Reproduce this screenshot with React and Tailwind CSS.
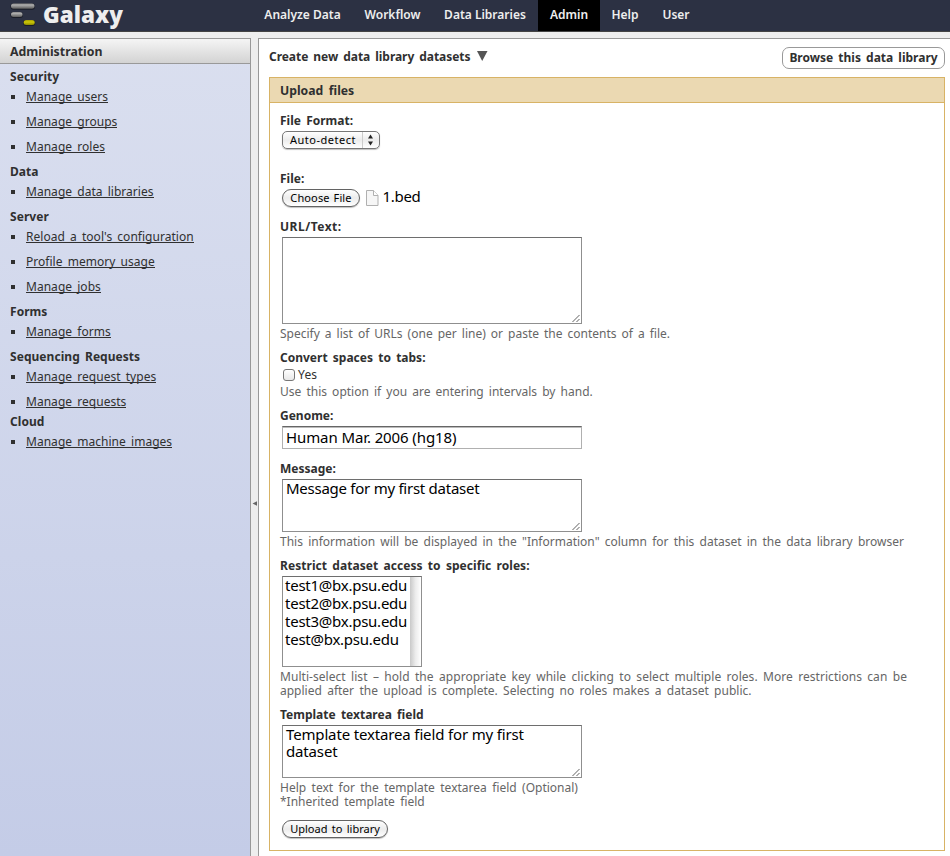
const NAV = [
  { label: 'Analyze Data', cls: 'w-[101px]' },
  { label: 'Workflow', cls: 'w-[79px]' },
  { label: 'Data Libraries', cls: 'w-[106px]' },
  { label: 'Admin', cls: 'w-[62px] bg-black' },
  { label: 'Help', cls: 'w-[50px]' },
  { label: 'User', cls: 'w-[52px]' },
];

const MENU = [
  { title: 'Security', items: ['Manage users', 'Manage groups', 'Manage roles'] },
  { title: 'Data', items: ['Manage data libraries'] },
  { title: 'Server', items: ["Reload a tool's configuration", 'Profile memory usage', 'Manage jobs'] },
  { title: 'Forms', items: ['Manage forms'] },
  { title: 'Sequencing Requests', items: ['Manage request types', 'Manage requests'], tight: true },
  { title: 'Cloud', items: ['Manage machine images'] },
];

function Logo() {
  return (
    <svg width="26" height="26" viewBox="0 0 26 26" className="block">
      <defs>
        <linearGradient id="bar" x1="0" y1="0" x2="0" y2="1">
          <stop offset="0" stopColor="#8c8c8c" />
          <stop offset="0.3" stopColor="#acacac" />
          <stop offset="1" stopColor="#5c5c5c" />
        </linearGradient>
        <linearGradient id="gold" x1="0" y1="0" x2="0" y2="1">
          <stop offset="0" stopColor="#a5a000" />
          <stop offset="0.4" stopColor="#cfca08" />
          <stop offset="1" stopColor="#8d8900" />
        </linearGradient>
      </defs>
      <rect x="0.500" y="1.500" width="24.500" height="6.200" rx="3" fill="#191c27" />
      <rect x="1" y="1.500" width="23.500" height="5.200" rx="2.600" fill="url(#bar)" />
      <rect x="0.500" y="10" width="12.500" height="6" rx="3" fill="#191c27" />
      <rect x="1" y="10" width="11.500" height="5" rx="2.500" fill="url(#bar)" />
      <rect x="13.200" y="18" width="12" height="6" rx="3" fill="#191c27" />
      <rect x="13.700" y="18" width="11" height="5" rx="2.500" fill="url(#gold)" />
    </svg>
  );
}

function Label({ children, className }) {
  return <div className={`h-[15px] text-[12px] leading-[15px] font-bold whitespace-nowrap text-[#303030] [word-spacing:2.1px] ${className}`}>{children}</div>;
}

function Help({ children, className }) {
  return <div className={`text-[12px] leading-[14px] whitespace-nowrap text-[#666] ${className}`}>{children}</div>;
}

function TextArea({ children, className }) {
  return (
    <div className={`relative ml-0.5 w-[300px] border border-[#8f8f8f] border-t-[#6e6e6e] bg-white px-[3px] text-[15px] leading-[17px] text-black ${className}`}>
      {children}
      <svg width="9" height="9" viewBox="0 0 9 9" className="absolute right-0 bottom-0">
        <path d="M.5 8 7.500 1M4.500 8 7.500 5" stroke="#333" strokeWidth="1" strokeDasharray="1.1 0.310" fill="none" />
      </svg>
    </div>
  );
}

function Button({ children, className }) {
  return (
    <div className={`flex h-[18px] items-center justify-center rounded-full border border-[#636363] bg-linear-to-b from-white via-[#ececec] to-white text-[11px] whitespace-nowrap text-black shadow-[0_1px_1px_rgba(0,0,0,0.25)] ${className}`}>
      {children}
    </div>
  );
}

export default function App() {
  return (
    <div className="flex h-[856px] w-[950px] flex-col overflow-hidden bg-[#eee] font-['Noto_Sans','Open_Sans',sans-serif] text-[12px] text-[#303030]">
      <header className="flex h-8 shrink-0 border-b border-[#444] bg-[#2c3143] pl-[10px]">
        <div className="flex w-[242px] pt-[2px]">
          <Logo />
          <span className="ml-[7px] h-[26px] font-['Open_Sans',sans-serif] text-[22.5px] leading-[26px] font-extrabold text-[#eee]">Galaxy</span>
        </div>
        <nav className="flex">
          {NAV.map((n) => (
            <a key={n.label} className={`flex justify-center text-[12px] leading-[29px] font-semibold whitespace-nowrap text-[#eee] ${n.cls}`}>
              {n.label}
            </a>
          ))}
        </nav>
      </header>

      <div className="flex min-h-0 flex-1 pt-1.5">
        <aside className="w-[251px] shrink-0 border-t border-r border-[#999] bg-linear-to-b from-[#dadfef] to-[#c4cce7]">
          <div className="h-[25px] border-b border-[#999] bg-linear-to-b from-[#f5f5f5] to-[#d3d3d3] pl-[10px] text-[12.3px] leading-[25px] font-bold">
            Administration
          </div>
          <div className="pt-[3px] pl-[10px] [word-spacing:2px]">
            {MENU.map((s) => (
              <section key={s.title}>
                <h3 className="h-5 text-[12px] leading-[20px] font-bold tracking-[0.05px]">{s.title}</h3>
                <ul className={s.tight ? '-mb-[5px]' : ''}>
                  {s.items.map((it) => (
                    <li key={it} className="flex h-[25px] pl-px">
                      <i className="mt-2 size-1 bg-[#303030]" />
                      <span className="ml-[11px] h-4 border-b border-[#303030] leading-[20px] tracking-[0.03px] whitespace-nowrap">
                        {it}
                      </span>
                    </li>
                  ))}
                </ul>
              </section>
            ))}
          </div>
        </aside>

        <div className="flex w-[7px] shrink-0 items-center">
          <svg width="7" height="7" viewBox="0 0 7 7" className="mt-[113px]">
            <path d="M1.5 3.5 6 1.2v4.6z" fill="#666" />
          </svg>
        </div>

        <main className="flex-1 border-t border-l border-[#999] bg-white pl-[10px]">
          <div className="flex h-[38px] items-start justify-between pr-[5px]">
            <h2 className="flex pt-2 text-[12px] leading-[20px] font-bold">
              <span className="w-[202px] tracking-[-0.05px] whitespace-nowrap [word-spacing:2px]">Create new data library datasets</span>
              <svg width="11" height="10" viewBox="0 0 11 10" className="mt-[4px] ml-1.5">
                <path d="M0 0h10.5L5.2 10z" fill="#555" />
              </svg>
            </h2>
            <a className="mt-2 flex h-[22px] w-[163px] items-center justify-center rounded-[7px] border border-[#999] text-[12px] font-bold whitespace-nowrap [word-spacing:2px]">
              Browse this data library
            </a>
          </div>

          <form className="h-[774px] w-[676px] border border-[#d8b365]">
            <div className="h-[25px] border-b border-[#d8b365] bg-[#ebd9b2] pl-[10px] text-[12.2px] leading-[25px] font-bold [word-spacing:2.5px]">
              Upload files
            </div>
            <div className="pt-[10px] pl-[10px]">
              <Label>File Format:</Label>
              <div className="mt-[3px] ml-0.5 flex h-[18px] w-[98px] rounded-[5px] border border-[#777] bg-linear-to-b from-white via-[#ececec] to-white shadow-[0_1px_1px_rgba(0,0,0,0.25)]">
                <span className="w-[80px] border-r border-[#ccc] pl-[7px] text-[11px] leading-[16px] tracking-[0.5px] text-black">Auto-detect</span>
                <svg width="16" height="16" viewBox="0 0 16 16">
                  <path d="M5 6.500 7.500 2.500 10 6.500zM5 9.500h5L7.500 13.500z" fill="#222" />
                </svg>
              </div>

              <Label className="mt-[22px]">File:</Label>
              <div className="mt-[3px] ml-0.5 flex h-[19px]">
                <Button className="w-[78px] tracking-[0.12px] [word-spacing:1px]">Choose File</Button>
                <svg width="13" height="17" viewBox="0 0 13 17" className="mt-px ml-[6px]">
                  <path d="M.5.5h7l4.500 5v10H.5z" fill="#f6f6f6" stroke="#b0b0b0" />
                  <path d="M7.500.5v5H12" fill="#fff" stroke="#b0b0b0" />
                </svg>
                <span className="ml-[3.5px] text-[15px] leading-[15px] tracking-[-0.3px] text-black">1.bed</span>
              </div>

              <Label className="mt-[11px] tracking-[0.5px]">URL/Text:</Label>
              <TextArea className="mt-[3px] h-[87px]" />
              <Help className="mt-[3px] [word-spacing:1.9px]">Specify a list of URLs (one per line) or paste the contents of a file.</Help>

              <Label className="mt-[9px]">Convert spaces to tabs:</Label>
              <div className="mt-[3px] ml-[3px] flex h-[14px]">
                <i className="mt-px size-3 rounded-[3px] border border-[#777] bg-linear-to-b from-white to-[#e8e8e8]" />
                <span className="ml-[3px] leading-[13px] tracking-[0.2px]">Yes</span>
              </div>
              <Help className="mt-[3px] [word-spacing:2px]">Use this option if you are entering intervals by hand.</Help>

              <Label className="mt-[9px]">Genome:</Label>
              <div className="mt-[3px] ml-0.5 h-[23px] w-[300px] border border-[#b0b0b0] border-t-[#666] pl-[3px] text-[15px] leading-[20px] tracking-[-0.1px] text-black shadow-[inset_0_1px_0_#bbb]">
                <span>Human Mar. 2006 (hg18)</span>
              </div>

              <Label className="mt-[12px]">Message:</Label>
              <TextArea className="mt-[3px] h-[53px] tracking-[-0.26px]">
                <span>Message for my first dataset</span>
              </TextArea>
              <Help className="mt-[3px] [word-spacing:2.1px]">This information will be displayed in the "Information" column for this dataset in the data library browser</Help>

              <Label className="mt-[9px] tracking-[0.05px]">Restrict dataset access to specific roles:</Label>
              <div className="mt-[3px] ml-0.5 flex h-[91px] w-[140px] justify-between border border-[#8f8f8f] border-t-[#6e6e6e] pl-0.5 text-[15px] leading-[18px] tracking-[-0.25px] text-black">
                <ul className="-mt-px">
                  {['test1', 'test2', 'test3', 'test'].map((u) => (
                    <li key={u}>{u}@bx.psu.edu</li>
                  ))}
                </ul>
                <i className="w-[11px] bg-linear-to-r from-[#c9c9c9] via-[#ececec] to-white" />
              </div>
              <Help className="mt-[3px] [word-spacing:2.2px]">
                <span className="tracking-[0.045px]">Multi-select list – hold the appropriate key while clicking to select multiple roles. More restrictions can be</span>
                <br />
                applied after the upload is complete. Selecting no roles makes a dataset public.
              </Help>

              <Label className="mt-[9px]">Template textarea field</Label>
              <TextArea className="mt-[3px] h-[53px] tracking-[-0.15px]">
                Template textarea field for my first
                <br />
                dataset
              </TextArea>
              <Help className="mt-[3px] [word-spacing:2.3px]">
                Help text for the template textarea field (Optional)
                <br />
                *Inherited template field
              </Help>

              <Button className="mt-[11px] ml-0.5 w-[106px] [word-spacing:1.5px]">Upload to library</Button>
            </div>
          </form>
        </main>
      </div>
    </div>
  );
}
